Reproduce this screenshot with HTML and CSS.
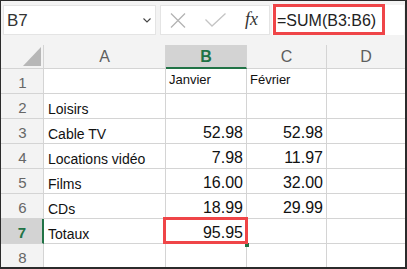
FILE: index.html
```html
<!DOCTYPE html>
<html lang="fr">
<head>
    <meta charset="UTF-8">
    <title>Totaux</title>
    <link rel="stylesheet" href="styles.css">
</head>
<body>
    <div class="window">
        <div class="toolbar">
            <div class="namebox">
                <span>B7</span>
                <svg width="8" height="5" viewBox="0 0 8 5"><polyline points="0.5,0.5 4,4 7.5,0.5" fill="none" stroke="#444" stroke-width="1.1"/></svg>
            </div>
            <div class="fxbox">
                <svg class="ico-x" width="16" height="15" viewBox="0 0 16 15"><path d="M1 0.5 L15 14.5 M15 0.5 L1 14.5" stroke="#b3b3b3" stroke-width="1.3" fill="none"/></svg>
                <svg class="ico-ok" width="21" height="14" viewBox="0 0 21 14"><polyline points="0.5,6.5 7,13 20.5,0.5" fill="none" stroke="#c4c4c4" stroke-width="1.3"/></svg>
                <span class="fx">fx</span>
            </div>
            <div class="formula">
                <span class="hl">=SUM(B3:B6)</span>
            </div>
        </div>

        <div class="sheet">
            <!-- headers -->
            <div class="corner"><svg width="18" height="19" viewBox="0 0 18 19"><polygon points="18,0 18,19 0,19" fill="#b7b7b7"/></svg></div>
            <div class="colhead">A</div>
            <div class="colhead active">B</div>
            <div class="colhead">C</div>
            <div class="colhead last">D</div>

            <div class="rowhead">1</div>
            <div class="cell"></div>
            <div class="cell month">Janvier</div>
            <div class="cell month">Février</div>
            <div class="cell last"></div>

            <div class="rowhead">2</div>
            <div class="cell">Loisirs</div>
            <div class="cell"></div>
            <div class="cell"></div>
            <div class="cell last"></div>

            <div class="rowhead">3</div>
            <div class="cell">Cable TV</div>
            <div class="cell num">52.98</div>
            <div class="cell num">52.98</div>
            <div class="cell last"></div>

            <div class="rowhead">4</div>
            <div class="cell">Locations vidéo</div>
            <div class="cell num">7.98</div>
            <div class="cell num">11.97</div>
            <div class="cell last"></div>

            <div class="rowhead">5</div>
            <div class="cell">Films</div>
            <div class="cell num">16.00</div>
            <div class="cell num">32.00</div>
            <div class="cell last"></div>

            <div class="rowhead">6</div>
            <div class="cell">CDs</div>
            <div class="cell num">18.99</div>
            <div class="cell num">29.99</div>
            <div class="cell last"></div>

            <div class="rowhead active">7</div>
            <div class="cell">Totaux</div>
            <div class="cell num selected">95.95</div>
            <div class="cell"></div>
            <div class="cell last"></div>

            <div class="rowhead bottom">8</div>
            <div class="cell bottom"></div>
            <div class="cell bottom"></div>
            <div class="cell bottom"></div>
            <div class="cell bottom last"></div>
        </div>
    </div>
</body>
</html>
```

FILE: styles.css
```css
body {
    margin: 0;
    font-family: "Liberation Sans", Arial, sans-serif;
}

.window {
    width: 407px;
    height: 269px;
    box-sizing: border-box;
    border: 1px solid #2b2b2b;
    border-right-width: 2px;
    border-bottom-width: 2px;
    background-color: #f3f3f3;
    overflow: hidden;
}

/* Formula bar */
.toolbar {
    display: flex;
    padding: 4px 1px 10px 2px;
}

.namebox,
.fxbox,
.formula {
    height: 30px;
    box-sizing: border-box;
    background-color: white;
    border: 1px solid #e4e4e4;
}

.namebox {
    width: 153px;
    display: flex;
    align-items: center;
    justify-content: space-between;
    padding: 2px 4px 0 3px;
    font-size: 17px;
    color: #333;
}

.namebox svg {
    margin-top: -2px;
}

.fxbox {
    width: 110px;
    margin-left: 4px;
    display: flex;
    align-items: center;
    padding-left: 9px;
}

.ico-ok {
    margin-left: 19px;
}

.fx {
    margin-left: 19px;
    font-family: "Liberation Serif", "Times New Roman", serif;
    font-style: italic;
    font-size: 18px;
    color: #333;
    margin-top: -2px;
}

.formula {
    flex: 1;
    margin-left: 2px;
    border: none;
}

.hl {
    display: flex;
    align-items: center;
    box-sizing: border-box;
    width: 112px;
    height: 31px;
    margin: -1px 0 0 1px;
    padding: 2px 0 0 1px;
    border: 3px solid #ef4548;
    font-size: 16px;
    color: #222;
}

/* Grid */
.sheet {
    display: grid;
    grid-template-columns: 43px 122px 81px 80px 78px;
    grid-template-rows: 24px repeat(7, 25px) 23px;
}

.sheet > div {
    box-sizing: border-box;
    border-right: 1px solid #d4d4d4;
    border-bottom: 1px solid #d4d4d4;
}

.sheet > .last {
    border-right: none;
}

.sheet > .bottom {
    border-bottom: none;
}

.corner {
    display: flex;
    align-items: flex-end;
    justify-content: flex-end;
    padding: 0 2px 2px 0;
}

.corner svg {
    display: block;
}

.colhead {
    display: flex;
    align-items: center;
    justify-content: center;
    font-size: 16px;
    color: #5e5e5e;
    padding-top: 1px;
}

.colhead.active {
    background-color: #d3d3d3;
    border-bottom: 2px solid #217346;
    color: #217346;
    font-weight: bold;
}

.rowhead {
    display: flex;
    align-items: center;
    justify-content: center;
    font-size: 15px;
    color: #666;
    padding: 3px 0 0 1px;
}

.rowhead.active {
    background-color: #d3d3d3;
    border-right: 2px solid #217346;
    color: #217346;
    font-weight: bold;
}

.cell {
    background-color: white;
    display: flex;
    align-items: flex-end;
    padding: 0 3px 1px 4px;
    font-size: 14px;
    line-height: 16px;
    color: #111;
    white-space: nowrap;
}

.cell.month {
    font-size: 13px;
    padding: 0 3px 5px 3px;
}

.cell.num {
    justify-content: flex-end;
    font-size: 16px;
    line-height: 18px;
    padding-right: 3px;
}

/* Selected cell with the red highlight */
.cell.selected {
    position: relative;
    z-index: 2;
}

.cell.selected::before {
    content: '';
    position: absolute;
    right: -3px;
    bottom: -4px;
    width: 4px;
    height: 4px;
    background-color: #217346;
}

.cell.selected::after {
    content: '';
    position: absolute;
    left: -3px;
    right: -2px;
    top: -2px;
    bottom: -1px;
    border: 3px solid #ef4548;
}
```
